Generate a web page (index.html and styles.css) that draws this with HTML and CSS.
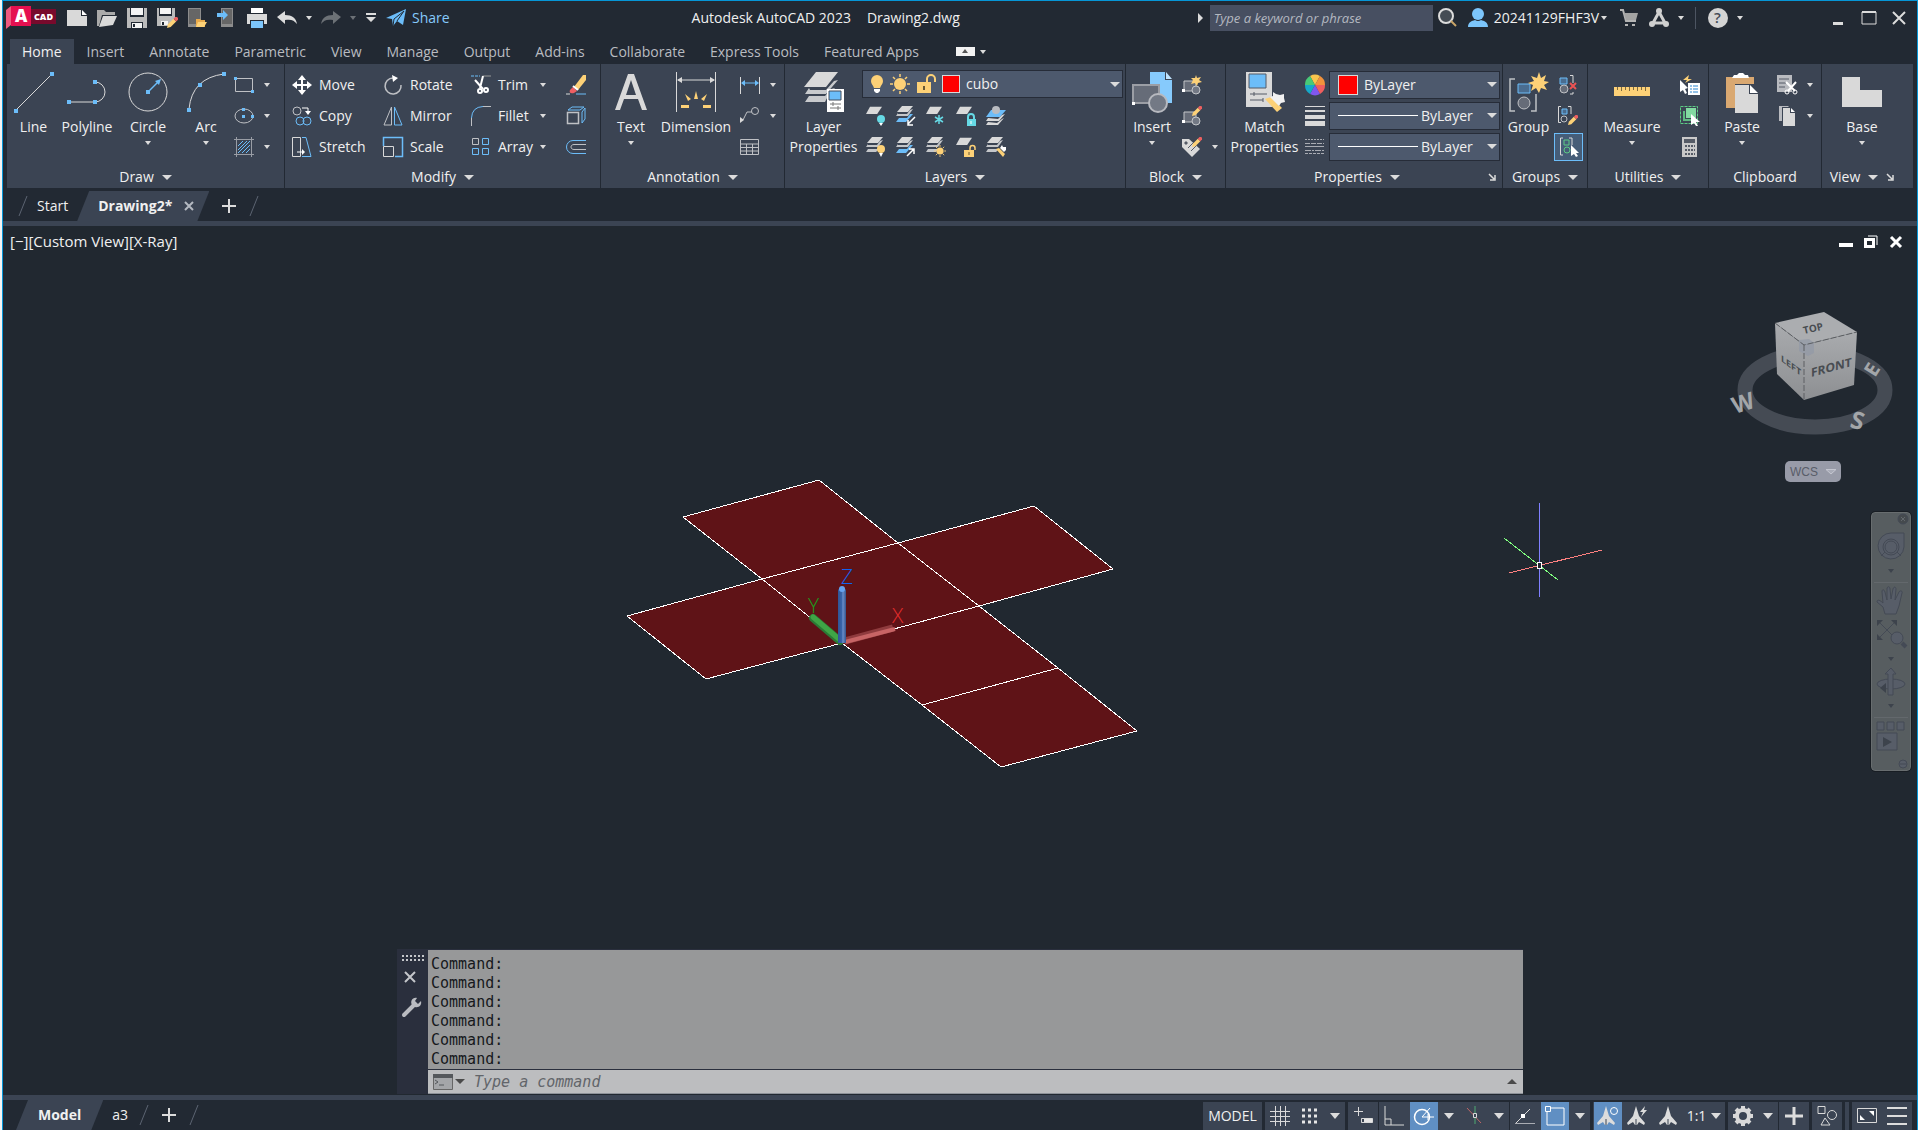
FILE: index.html
```html
<!DOCTYPE html>
<html lang="en">
<head>
    <meta charset="UTF-8">
    <meta name="viewport" content="width=device-width, initial-scale=1.0">
    <title>Autodesk AutoCAD 2023 - Drawing2.dwg</title>
    <link rel="stylesheet" href="styles.css">
</head>
<body>
    <!-- Shapes used more than once -->
    <svg class="defs" aria-hidden="true">
        <symbol id="caret" viewBox="0 0 6 4"><path d="M0 0h6L3 4z" fill="#dcdcdc"/></symbol>
        <symbol id="sheet" viewBox="0 0 20 20"><path d="M5 1h15l-6 9H0z" fill="#d9d9d9"/></symbol>
        <symbol id="stack" viewBox="0 0 20 20">
            <path d="M6 0h11l-5 6H1z" fill="#d9d9d9"/>
            <path d="M2 7L0 10h12l5-7-3 1-3 4H2zM2 12l-2 3h10l3-3z" fill="#c4c6c9"/>
        </symbol>
        <symbol id="stack-blue" viewBox="0 0 20 20">
            <path d="M6 0h11l-5 6H1z" fill="#d9d9d9"/>
            <path d="M2 7L0 10h12l5-7-3 1-3 4H2z" fill="#c4c6c9"/>
            <path d="M3 12l-3 4h10l7-8h-3l-3 4z" fill="#6cbdf9"/>
        </symbol>
        <symbol id="bulb" viewBox="0 0 14 20"><path d="M7 1a6 6 0 0 0-6 6c0 3 2 4 3 7h6c1-3 3-4 3-7a6 6 0 0 0-6-6z" fill="#fdd177"/><path d="M4 15h6v2l-2 2H6l-2-2z" fill="#fff"/></symbol>
        <symbol id="sun" viewBox="0 0 20 20"><circle cx="10" cy="10" r="6" fill="#fdd177"/><path d="M10 0v3M10 17v3M0 10h3M17 10h3M3 3l2 2M15 15l2 2M3 17l2-2M15 5l2-2" stroke="#fdd177" stroke-width="1.5"/></symbol>
        <symbol id="pencil" viewBox="0 0 12 12"><path d="M0 12l1-4 6-6 3 3-6 6z" fill="#fdd177"/><path d="M7 2l2-2h2l1 1v2l-2 2z" fill="#ec6060"/></symbol>
        <symbol id="block" viewBox="0 0 20 20"><path d="M2 6h12v10H2z" fill="#666c78" stroke="#c4c6c9"/><circle cx="14" cy="15" r="4" fill="#737985" stroke="#c4c6c9"/><path d="M0 14h3v3H0z" fill="#fff"/></symbol>
        <symbol id="launcher" viewBox="0 0 8 8"><path d="M1 1l5 5M7 2v5H2" fill="none" stroke="#dcdcdc" stroke-width="1.5"/></symbol>
        <symbol id="compass" viewBox="0 0 20 20"><path d="M10 0l3 10 6 7-1 2-5-3-2 3H9l-2-3-5 3-1-2 6-7z" fill="#dcdcdc"/><path d="M10 13v6" stroke="#3b4453"/></symbol>
    </svg>

    <div class="app">
        <header class="titlebar">
            <div class="quick-access">
                <button class="logo" aria-label="Application menu">
                    <svg width="50" height="24" viewBox="0 0 50 24">
                        <path d="M22 3h28v15H22z" fill="#780a2c"/>
                        <path d="M0 4l5-4v19l-5 4z" fill="#f0587e"/>
                        <path d="M5 0h20v20H5z" fill="#e51050"/>
                        <text x="9" y="16" font-size="17" font-weight="800" fill="#fff">A</text>
                        <text x="28" y="14" font-size="9" font-weight="800" fill="#fff">CAD</text>
                    </svg>
                </button>
                <button class="icon-button" aria-label="New">
                    <svg width="20" height="20"><path d="M0 2h14v6h6v10H0z" fill="#d9d9d9"/><path d="M15 2l5 5h-5z" fill="#fff"/></svg>
                </button>
                <button class="icon-button" aria-label="Open">
                    <svg width="20" height="20"><path d="M0 2h7l2 2h9v3H5L2 18H0z" fill="#aaa"/><path d="M6 8h14l-4 9-14 2z" fill="#d9d9d9"/></svg>
                </button>
                <button class="icon-button" aria-label="Save">
                    <svg width="20" height="20"><path d="M0 0h3v9h14V0h3v20h-4v-6H4v6H0z" fill="#bbb"/><path d="M4 0h12v7H4zM5 15h10v5H5z" fill="#f4f4f4"/><path d="M6 16h2v3H6z" fill="#222933"/></svg>
                </button>
                <button class="icon-button" aria-label="Save as">
                    <svg width="20" height="20"><path d="M0 0h2v8h13V0h3v10l-6 8H0z" fill="#bbb"/><path d="M3 0h11v6H3zM4 13h7v4H4z" fill="#f4f4f4"/><path d="M5 14h2v3H5z" fill="#222933"/><use href="#pencil" x="10" y="9" width="11" height="11"/></svg>
                </button>
                <button class="icon-button" aria-label="Open from web and mobile">
                    <svg width="20" height="20"><path d="M1 0h13v19H1z" fill="#8c8c8c"/><path d="M2 1h11v15H2z" fill="#666"/><path d="M9 11h4l1 1h4v7H9z" fill="#e9ab4c"/><path d="M11 14h9l-3 5H9z" fill="#fdd177"/></svg>
                </button>
                <button class="icon-button" aria-label="Save to web and mobile">
                    <svg width="20" height="20"><path d="M4 0h12v19H4z" fill="#8c8c8c"/><path d="M5 1h10v15H5z" fill="#666"/><path d="M0 5h6V2l5 5-5 5V9H0z" fill="#6cbdf9"/></svg>
                </button>
                <button class="icon-button" aria-label="Plot">
                    <svg width="20" height="20"><path d="M4 0h12v5H4z" fill="#fff"/><path d="M0 6h20v10h-3v-4H3v4H0z" fill="#d9d9d9"/><path d="M4 13h12v7H4z" fill="#7cc5fb"/></svg>
                </button>
                <button class="icon-button" aria-label="Undo">
                    <svg width="20" height="20"><path d="M0 9l8-6v4c7 0 11 3 12 9-3-4-6-5-12-4v4z" fill="#dcdcdc"/></svg>
                </button>
                <button class="caret-button" aria-label="Undo list"><svg width="6" height="4"><use href="#caret"/></svg></button>
                <button class="icon-button dim" aria-label="Redo">
                    <svg width="20" height="20"><path d="M20 9l-8-6v4C5 7 1 10 0 16c3-4 6-5 12-4v4z" fill="#dcdcdc"/></svg>
                </button>
                <button class="caret-button dim" aria-label="Redo list"><svg width="6" height="4"><use href="#caret"/></svg></button>
                <button class="caret-button customize" aria-label="Customize toolbar"><svg width="10" height="10"><path d="M0 0h10v2H0zM0 4h10L5 9z" fill="#dcdcdc"/></svg></button>
                <button class="share">
                    <svg width="20" height="18"><path d="M0 9L20 0l-3 16-6-4-4 5-1-7z" fill="#6cbdf9"/><path d="M7 17l1-7 10-8-7 10" fill="none" stroke="#222933"/></svg>
                    Share
                </button>
            </div>

            <div class="window-title">
                <span>Autodesk AutoCAD 2023</span>
                <span>Drawing2.dwg</span>
            </div>

            <div class="info-center">
                <svg width="5" height="10"><path d="M0 0l5 5-5 5z" fill="#dcdcdc"/></svg>
                <input class="search" type="search" placeholder="Type a keyword or phrase" aria-label="Search">
                <button class="icon-button" aria-label="Find">
                    <svg width="20" height="20"><circle cx="8" cy="8" r="7" fill="#454c54" stroke="#dcdcdc" stroke-width="2"/><path d="M13 13l5 5" stroke="#c9a468" stroke-width="2"/></svg>
                </button>
                <button class="account">
                    <svg width="20" height="20"><circle cx="10" cy="6" r="6" fill="#7cc5fb"/><path d="M0 19c0-5 4-6 7-7q3 2 6 0c3 1 7 2 7 7z" fill="#7cc5fb"/></svg>
                    <span>20241129FHF3V</span>
                    <svg width="6" height="4"><use href="#caret"/></svg>
                </button>
                <button class="icon-button" aria-label="App store">
                    <svg width="18" height="18"><path d="M0 1h3l3 11h10" fill="none" stroke="#b4b4b4" stroke-width="2"/><path d="M4 4h14l-2 7H6z" fill="#a3a3a3"/><path d="M5 15h3v2H5zM12 15h3v2h-3z" fill="#b4b4b4"/></svg>
                </button>
                <button class="icon-button" aria-label="Connected services">
                    <svg width="20" height="20"><path d="M10 4L4 15h12z" fill="none" stroke="#d0d0d0" stroke-width="3"/><circle cx="10" cy="3" r="3" fill="#d0d0d0"/><circle cx="3" cy="16" r="3" fill="#d0d0d0"/><circle cx="17" cy="16" r="3" fill="#d0d0d0"/></svg>
                </button>
                <button class="caret-button" aria-label="Services list"><svg width="6" height="4"><use href="#caret"/></svg></button>
                <span class="divider"></span>
                <button class="icon-button" aria-label="Help">
                    <svg width="20" height="20"><circle cx="10" cy="10" r="10" fill="#d4d4d4"/><text x="6" y="15" font-size="15" font-weight="600" fill="#444b57">?</text></svg>
                </button>
                <button class="caret-button" aria-label="Help list"><svg width="6" height="4"><use href="#caret"/></svg></button>
            </div>

            <div class="window-buttons">
                <button aria-label="Minimize"><svg width="16" height="16"><path d="M2 12h10v3H2z" fill="#dcdcdc"/></svg></button>
                <button aria-label="Maximize"><svg width="16" height="16"><path d="M1 2h14v12H1z" fill="none" stroke="#dcdcdc"/><path d="M1 1h14v2H1z" fill="#dcdcdc"/></svg></button>
                <button aria-label="Close"><svg width="16" height="16"><path d="M2 2l12 12M14 2L2 14" stroke="#dcdcdc" stroke-width="2"/></svg></button>
            </div>
        </header>

        <nav class="ribbon-tabs">
            <button class="active">Home</button>
            <button>Insert</button>
            <button>Annotate</button>
            <button>Parametric</button>
            <button>View</button>
            <button>Manage</button>
            <button>Output</button>
            <button>Add-ins</button>
            <button>Collaborate</button>
            <button>Express Tools</button>
            <button>Featured Apps</button>
            <button class="ribbon-toggle" aria-label="Minimize ribbon">
                <svg width="19" height="9"><path d="M0 0h19v9H0z" fill="#f2f2f2"/><path d="M6 6l3-4 3 4z" fill="#555"/></svg>
                <svg width="6" height="4"><use href="#caret"/></svg>
            </button>
        </nav>

        <main class="ribbon">
            <section class="panel draw">
                <div class="panel-body">
                    <button class="big"><svg width="40" height="40"><path d="M2 38L38 2" stroke="#d9d9d9"/><path d="M0 37h4v4H0zM36 0h4v4h-4z" fill="#6cbdf9"/></svg>Line</button>
                    <button class="big"><svg width="40" height="40"><path d="M2 30h26a10 10 0 0 0 0-20" fill="none" stroke="#d9d9d9"/><path d="M0 28h4v4H0zM26 28h4v4h-4zM26 8h4v4h-4z" fill="#6cbdf9"/></svg>Polyline</button>
                    <button class="big"><svg width="40" height="40"><circle cx="20" cy="20" r="19" fill="none" stroke="#d9d9d9"/><path d="M20 20l10-10" stroke="#6cbdf9" stroke-width="1.5"/><path d="M18 18h4v4h-4zM33 7l-2 6-4-4z" fill="#6cbdf9"/></svg>Circle<svg width="6" height="4"><use href="#caret"/></svg></button>
                    <button class="big"><svg width="40" height="40"><path d="M3 37Q6 6 38 2" fill="none" stroke="#d9d9d9"/><path d="M1 36h4v4H1zM36 0h4v4h-4zM12 11h4v4h-4z" fill="#6cbdf9"/></svg>Arc<svg width="6" height="4"><use href="#caret"/></svg></button>
                    <div class="stack">
                        <button class="tool" aria-label="Rectangle"><svg width="20" height="20"><path d="M1.5 3.5h17v13h-17z" fill="none" stroke="#bfc1c5"/><path d="M0 2h3v3H0zM17 15h3v3h-3z" fill="#6cbdf9"/></svg><svg class="more" width="6" height="4"><use href="#caret"/></svg></button>
                        <button class="tool" aria-label="Ellipse"><svg width="20" height="20"><ellipse cx="10" cy="10" rx="9" ry="7" fill="none" stroke="#bfc1c5"/><path d="M8 2h3v3H8zM8 9h3v3H8zM17 9h3v3h-3z" fill="#6cbdf9"/></svg><svg class="more" width="6" height="4"><use href="#caret"/></svg></button>
                        <button class="tool" aria-label="Hatch"><svg width="20" height="20"><path d="M2.5 0v20M17.5 0v20M0 2.5h20M0 17.5h20" stroke="#999da5"/><path d="M4 9l5-5M4 13l9-9M4 16L16 4M8 16l8-8M12 16l4-4" stroke="#6cbdf9"/></svg><svg class="more" width="6" height="4"><use href="#caret"/></svg></button>
                    </div>
                </div>
                <button class="panel-title"><span>Draw</span><svg width="10" height="5" viewBox="0 0 10 5"><path d="M0 0h10L5 5z" fill="#dcdcdc"/></svg></button>
            </section>

            <section class="panel modify">
                <div class="panel-body">
                    <div class="stack">
                        <button class="tool"><svg width="20" height="20"><path d="M10 2v16M2 10h16" stroke="#fff" stroke-width="2"/><path d="M10 0l4 5H6zM10 20l4-5H6zM0 10l5-4v8zM20 10l-5-4v8z" fill="#fff"/></svg>Move</button>
                        <button class="tool"><svg width="20" height="20"><circle cx="5" cy="5" r="4" fill="none" stroke="#bfc1c5"/><circle cx="8" cy="15" r="4" fill="none" stroke="#6cbdf9"/><circle cx="15" cy="15" r="4" fill="none" stroke="#6cbdf9"/><path d="M10 2h6v4" fill="none" stroke="#fff"/><path d="M13 5h6l-3 4z" fill="#fff"/></svg>Copy</button>
                        <button class="tool"><svg width="20" height="20"><path d="M.5.5h8v19h-8z" fill="none" stroke="#d9d9d9"/><path d="M10 .5h4l5 19h-9" fill="none" stroke="#6cbdf9"/><path d="M5 15h6" stroke="#fff"/><path d="M10 12l3 3-3 3z" fill="#fff"/></svg>Stretch</button>
                    </div>
                    <div class="stack">
                        <button class="tool"><svg width="20" height="20"><path d="M10 3a8 8 0 1 0 8 7" fill="none" stroke="#bfc1c5" stroke-width="1.5"/><path d="M9 0l6 3-5 4z" fill="#fff"/></svg>Rotate</button>
                        <button class="tool"><svg width="20" height="20"><path d="M8.5 1v18H1z" fill="none" stroke="#bfc1c5"/><path d="M11.5 1v18H19z" fill="none" stroke="#6cbdf9"/></svg>Mirror</button>
                        <button class="tool"><svg width="20" height="20"><path d="M.5 9V.5h19v19H12" fill="none" stroke="#6cbdf9" stroke-width="1.5"/><path d="M.5 9.5h10v10H.5z" fill="none" stroke="#d9d9d9"/></svg>Scale</button>
                    </div>
                    <div class="stack">
                        <button class="tool"><svg width="20" height="20"><path d="M0 1h9" stroke="#6cbdf9" stroke-dasharray="3 1"/><path d="M12 1h8" stroke="#999"/><path d="M4 5l8 9M12 1l-3 12" stroke="#fff" stroke-width="2"/><circle cx="9" cy="16" r="2" fill="none" stroke="#fff" stroke-width="2"/><circle cx="15" cy="15" r="2" fill="none" stroke="#fff" stroke-width="2"/></svg>Trim<svg class="more" width="6" height="4"><use href="#caret"/></svg></button>
                        <button class="tool"><svg width="20" height="20"><path d="M.5 12Q1 1 12 .5" fill="none" stroke="#6cbdf9"/><path d="M.5 12v8M12 .5h8" stroke="#bfc1c5"/></svg>Fillet<svg class="more" width="6" height="4"><use href="#caret"/></svg></button>
                        <button class="tool"><svg width="20" height="20" fill="none"><path d="M1.5 1.5h6v6h-6z" stroke="#bfc1c5"/><path d="M11.5 1.5h6v6h-6zM1.5 11.5h6v6h-6zM11.5 11.5h6v6h-6z" stroke="#6cbdf9"/></svg>Array<svg class="more" width="6" height="4"><use href="#caret"/></svg></button>
                    </div>
                    <div class="stack">
                        <button class="tool" aria-label="Erase"><svg width="20" height="20"><path d="M8 12L17 0h3v5l-8 10z" fill="#fdd177"/><path d="M7 12l4 4-3 2c-4 1-5-1-4-3z" fill="#ef5f63"/><path d="M7 11l5 4" stroke="#fff" stroke-width="2"/><path d="M0 19h4" stroke="#d9d9d9"/><path d="M10 19h10" stroke="#6cbdf9"/></svg></button>
                        <button class="tool" aria-label="Explode"><svg width="20" height="20" fill="none"><path d="M1.5 6.5h11v11h-11z" stroke="#bfc1c5" stroke-width="1.5"/><path d="M2 4l4-3h12l-4 3zM16 6l3-4v11l-3 4z" stroke="#6cbdf9"/></svg></button>
                        <button class="tool" aria-label="Offset"><svg width="20" height="20" fill="none"><path d="M20 3.5H7a6 6 0 0 0 0 13h13" stroke="#6cbdf9"/><path d="M20 7.5H8c-4 0-4 5 0 5h12" stroke="#bfc1c5"/></svg></button>
                    </div>
                </div>
                <button class="panel-title"><span>Modify</span><svg width="10" height="5" viewBox="0 0 10 5"><path d="M0 0h10L5 5z" fill="#dcdcdc"/></svg></button>
            </section>

            <section class="panel annotation">
                <div class="panel-body">
                    <button class="big"><svg width="40" height="40"><path d="M4 38L17 2h6l13 36h-5l-4-11H13L9 38zM15 23h10L20 8z" fill="#d9d9d9"/></svg>Text<svg width="6" height="4"><use href="#caret"/></svg></button>
                    <button class="big"><svg width="40" height="40"><path d="M.5 0v40M39.5 0v40M2 8h36" stroke="#d9d9d9"/><path d="M1 8l5-3v6zM39 8l-5-3v6z" fill="#d9d9d9"/><path d="M20 19l-2 8h4zM9 22l3 7 3-2zM31 22l-3 7-3-2zM5 33h8v3H5zM35 33h-8v3h8z" fill="#fdd177"/></svg>Dimension</button>
                    <div class="stack">
                        <button class="tool" aria-label="Linear dimension"><svg width="20" height="20"><path d="M.5 2v17M19.5 2v17" stroke="#d9d9d9"/><path d="M2 8h16" stroke="#6cbdf9"/><path d="M1 8l4-3v6zM19 8l-4-3v6z" fill="#6cbdf9"/></svg><svg class="more" width="6" height="4"><use href="#caret"/></svg></button>
                        <button class="tool" aria-label="Leader"><svg width="20" height="20"><path d="M3 14L7 6h5" fill="none" stroke="#bfc1c5"/><circle cx="15" cy="5" r="3.5" fill="none" stroke="#bfc1c5"/><path d="M0 17v-6l4 3z" fill="#d9d9d9"/></svg><svg class="more" width="6" height="4"><use href="#caret"/></svg></button>
                        <button class="tool" aria-label="Table"><svg width="20" height="20"><path d="M.5 2.5h18v15H.5zM0 7h19M0 10.5h19M0 14h19M6.5 7v10M12.5 7v10" fill="none" stroke="#bfc1c5"/></svg></button>
                    </div>
                </div>
                <button class="panel-title"><span>Annotation</span><svg width="10" height="5" viewBox="0 0 10 5"><path d="M0 0h10L5 5z" fill="#dcdcdc"/></svg></button>
            </section>

            <section class="panel layers">
                <div class="panel-body">
                    <button class="big"><svg width="40" height="40"><path d="M12 0h22L22 15H0z" fill="#d9d9d9"/><path d="M5 16L1 22h21L34 8l-4 1-8 9H6zM5 24l-4 6h20l3-6 7-8-4 1-6 7z" fill="#c8cacd"/><path d="M23 17h17v23H23z" fill="#fff"/><path d="M25 19h12v9H25z" fill="#6cbdf9" stroke="#454c5a"/><path d="M26 32h11M26 36h11M29 30v4M34 34v4" stroke="#777"/></svg>Layer<br>Properties</button>
                    <div class="layer-tools">
                        <label class="combo">
                            <svg width="14" height="20"><use href="#bulb"/></svg>
                            <svg width="20" height="20"><use href="#sun"/></svg>
                            <svg width="20" height="20"><path d="M1 8h14v11H1z" fill="#fdd177"/><path d="M11 8V5a4 4 0 0 1 8 0v3" fill="none" stroke="#fdd177" stroke-width="2"/><path d="M8 12v4" stroke="#6b5a35" stroke-width="2"/></svg>
                            <span class="swatch"></span>
                            <select aria-label="Layer"><option>cubo</option></select>
                            <svg width="10" height="5" viewBox="0 0 10 5"><path d="M0 0h10L5 5z" fill="#dcdcdc"/></svg>
                        </label>
                        <div class="tool-row">
                            <button aria-label="Layer off"><svg width="20" height="20"><use href="#sheet" width="16" height="16"/><circle cx="15" cy="13" r="4" fill="#66d9e5"/><path d="M13 17h4l-2 3z" fill="#fff"/></svg></button>
                            <button aria-label="Isolate layer"><svg width="20" height="20"><use href="#stack-blue"/><path d="M19 11l-7 7M12 14v5h5" fill="none" stroke="#fff" stroke-width="1.5"/></svg></button>
                            <button aria-label="Freeze layer"><svg width="20" height="20"><use href="#sheet" width="16" height="16"/><path d="M13 9v9M9 11l8 5M9 16l8-5" stroke="#66d9e5" stroke-width="1.5"/></svg></button>
                            <button aria-label="Lock layer"><svg width="20" height="20"><use href="#sheet" width="16" height="16"/><path d="M11 13h9v7h-9z" fill="#66d9e5"/><path d="M12 13v-2a3 3 0 0 1 6 0v2" fill="none" stroke="#66d9e5" stroke-width="2"/><path d="M15 15v3" stroke="#fff"/></svg></button>
                            <button aria-label="Make current"><svg width="20" height="20"><path d="M5 4h15l-6 7H0z" fill="#6cbdf9"/><path d="M2 12l-2 3h13l6-7-3 1-4 4zM2 16l-2 3h12l6-7-2 1-5 4z" fill="#d9d9d9"/><circle cx="10" cy="4" r="4" fill="#b9bbc0"/></svg></button>
                        </div>
                        <div class="tool-row">
                            <button aria-label="Turn all on"><svg width="20" height="20"><use href="#stack"/><circle cx="15" cy="12" r="4" fill="#fdd177"/><path d="M13 16h4l-2 4z" fill="#fff"/></svg></button>
                            <button aria-label="Unisolate"><svg width="20" height="20"><use href="#stack-blue"/><path d="M11 19l7-7M13 12h5v5" fill="none" stroke="#fff" stroke-width="1.5"/></svg></button>
                            <button aria-label="Thaw all"><svg width="20" height="20"><use href="#stack"/><use href="#sun" x="8" y="8" width="12" height="12"/></svg></button>
                            <button aria-label="Unlock layer"><svg width="20" height="20"><use href="#sheet" width="16" height="16"/><path d="M8 13h10v7H8z" fill="#fdd177"/><path d="M14 13v-2a2.5 2.5 0 0 1 5 0v2" fill="none" stroke="#fdd177" stroke-width="1.5"/><path d="M13 15v3" stroke="#6b5a35"/></svg></button>
                            <button aria-label="Match layer"><svg width="20" height="20"><use href="#stack"/><path d="M10 12l3-1 6 6-2 3z" fill="#fdd177"/><path d="M14 11l2-3 1 2h3v3l-2 2z" fill="#fff"/></svg></button>
                        </div>
                    </div>
                </div>
                <button class="panel-title"><span>Layers</span><svg width="10" height="5" viewBox="0 0 10 5"><path d="M0 0h10L5 5z" fill="#dcdcdc"/></svg></button>
            </section>

            <section class="panel block">
                <div class="panel-body">
                    <button class="big"><svg width="40" height="40"><path d="M18 0h15v8h7v23H18z" fill="#86cafc"/><path d="M34 0l6 7h-6z" fill="#bfe3fe"/><path d="M1 13h26v18H1z" fill="#666c78" stroke="#9b9ea5" stroke-width="2"/><circle cx="26" cy="31" r="9" fill="#737985" stroke="#b7b9bf" stroke-width="2"/><path d="M0 30h3v3H0z" fill="#fff"/></svg>Insert<svg width="6" height="4"><use href="#caret"/></svg></button>
                    <div class="stack">
                        <button class="tool" aria-label="Create block"><svg width="20" height="20"><use href="#block"/><path d="M14 0l1 3 4-1-2 3 3 2-4 1-1 3-2-3-4 1 2-4-2-2 4 0z" fill="#fdd177"/></svg></button>
                        <button class="tool" aria-label="Edit block"><svg width="20" height="20"><use href="#block"/><use href="#pencil" x="10" y="0" width="10" height="10"/></svg></button>
                        <button class="tool" aria-label="Edit attributes"><svg width="20" height="20"><path d="M0 2h7l11 10-8 8L0 10z" fill="#d9d9d9"/><path d="M3 5h2v2H3zM6 11l5-5M9 14l5-5" stroke="#555b66" fill="#555b66"/><use href="#pencil" x="10" y="0" width="10" height="10"/></svg><svg class="more" width="6" height="4"><use href="#caret"/></svg></button>
                    </div>
                </div>
                <button class="panel-title"><span>Block</span><svg width="10" height="5" viewBox="0 0 10 5"><path d="M0 0h10L5 5z" fill="#dcdcdc"/></svg></button>
            </section>

            <section class="panel properties">
                <div class="panel-body">
                    <button class="big"><svg width="40" height="40"><path d="M1 0h26v35H1z" fill="#d9d9d9"/><path d="M4 2h17v14H4z" fill="#6cbdf9" stroke="#555b66"/><path d="M5 22h17M5 28h13M9 20v4M18 26v4" stroke="#555b66"/><path d="M20 27l6-2 11 11-5 4z" fill="#fdd177"/><path d="M25 25l3-1v-4l3 2 4 1 4-1v4l1 4-4 1-2 3z" fill="#f1f1f1"/></svg>Match<br>Properties</button>
                    <div class="stack">
                        <button class="tool" aria-label="Object color"><svg width="20" height="20"><path d="M10 10L5 1a10 10 0 0 1 10 0z" fill="#f9c44d"/><path d="M10 10l5-9a10 10 0 0 1 5 9z" fill="#f2923c"/><path d="M10 10h10a10 10 0 0 1-5 9z" fill="#ef5e5e"/><path d="M10 10l5 9a10 10 0 0 1-10 0z" fill="#8057ee"/><path d="M10 10l-5 9a10 10 0 0 1-5-9z" fill="#15a9c9"/><path d="M10 10H0a10 10 0 0 1 5-9z" fill="#48c977"/></svg></button>
                        <button class="tool" aria-label="Lineweight"><svg width="20" height="20"><path d="M0 0h20v1H0zM0 4h20v2H0zM0 9h20v4H0zM0 15h20v5H0z" fill="#d9d9d9"/></svg></button>
                        <button class="tool" aria-label="Linetype"><svg width="20" height="20" stroke="#a9acb3"><path d="M0 2.5h19" stroke-dasharray="2 1"/><path d="M0 6.5h19" stroke-dasharray="5 1"/><path d="M0 9.5h19"/><path d="M0 13.5h19" stroke-dasharray="6 1 2 1"/><path d="M0 16.5h19" stroke-dasharray="3 1"/></svg></button>
                    </div>
                    <div class="stack">
                        <label class="combo"><span class="swatch large"></span><select aria-label="Color"><option>ByLayer</option></select><svg width="10" height="5" viewBox="0 0 10 5"><path d="M0 0h10L5 5z" fill="#dcdcdc"/></svg></label>
                        <label class="combo"><span class="sample"></span><select aria-label="Lineweight"><option>ByLayer</option></select><svg width="10" height="5" viewBox="0 0 10 5"><path d="M0 0h10L5 5z" fill="#dcdcdc"/></svg></label>
                        <label class="combo"><span class="sample"></span><select aria-label="Linetype"><option>ByLayer</option></select><svg width="10" height="5" viewBox="0 0 10 5"><path d="M0 0h10L5 5z" fill="#dcdcdc"/></svg></label>
                    </div>
                </div>
                <div class="panel-foot">
                    <button class="panel-title"><span>Properties</span><svg width="10" height="5" viewBox="0 0 10 5"><path d="M0 0h10L5 5z" fill="#dcdcdc"/></svg></button>
                    <button aria-label="Properties palette"><svg width="8" height="8"><use href="#launcher"/></svg></button>
                </div>
            </section>

            <section class="panel groups">
                <div class="panel-body">
                    <button class="big"><svg width="40" height="40"><path d="M6 7H1v32h5M22 39h5V22" fill="none" stroke="#bfc1c5" stroke-width="1.5"/><path d="M9 12h12v9H9z" fill="#4a6d90" stroke="#6cbdf9"/><circle cx="15" cy="31" r="6" fill="#666c78" stroke="#bfc1c5"/><path d="M30 0l2 6 5-3-2 6 5 1-5 3 3 5-6-2-2 5-3-5-5 3 2-6-5-2 6-2-3-5 6 2z" fill="#fdd177"/></svg>Group</button>
                    <div class="stack">
                        <button class="tool" aria-label="Ungroup"><svg width="20" height="20" fill="none"><path d="M2 3h7v6H2z" fill="#4a6d90" stroke="#6cbdf9"/><circle cx="6" cy="14" r="4" fill="#666c78" stroke="#bfc1c5"/><path d="M12 .5h3V8M15 17v2h-3" stroke="#d9d9d9"/><path d="M12 8l6 6M18 8l-6 6" stroke="#ec5353" stroke-width="2"/></svg></button>
                        <button class="tool" aria-label="Group edit"><svg width="20" height="20" fill="none"><path d="M3 .5H.5v16H3M10 .5h3V8" stroke="#d9d9d9"/><path d="M4 3h5v5H4z" fill="#4a6d90" stroke="#6cbdf9"/><circle cx="6" cy="13" r="3" stroke="#bfc1c5"/><use href="#pencil" x="10" y="9" width="10" height="10"/></svg></button>
                        <button class="tool selected" aria-label="Group selection"><svg width="20" height="20" fill="none"><path d="M4 1H1.5v17H4M10 1h3v7" stroke="#d9d9d9"/><path d="M5 3h5v5H5z" stroke="#5dcc85"/><circle cx="8" cy="13" r="3" stroke="#5dcc85"/><path d="M12 8l8 8h-3l2 3-2 1-2-3-3 2z" fill="#fff"/></svg></button>
                    </div>
                </div>
                <button class="panel-title"><span>Groups</span><svg width="10" height="5" viewBox="0 0 10 5"><path d="M0 0h10L5 5z" fill="#dcdcdc"/></svg></button>
            </section>

            <section class="panel utilities">
                <div class="panel-body">
                    <button class="big"><svg width="40" height="40"><path d="M2 15h36v9H2z" fill="#fdd177"/><path d="M5.5 15v3M9.5 15v4M13.5 15v3M17.5 15v4M21.5 15v3M25.5 15v4M29.5 15v3M33.5 15v4" stroke="#7d6a3f"/></svg>Measure<svg width="6" height="4"><use href="#caret"/></svg></button>
                    <div class="stack">
                        <button class="tool" aria-label="Quick select"><svg width="20" height="20"><path d="M0 5l8 8-3 1 2 4-2 1-2-4-3 2z" fill="#fff"/><path d="M9 0L3 5h4L5 8l7-4H8z" fill="#fdd177"/><path d="M8 8h12v12H8z" fill="#fff"/><path d="M10 11h2M10 14h2M10 17h2M13 11h5M13 14h5M13 17h5" stroke="#2a86d1"/></svg></button>
                        <button class="tool" aria-label="Select all"><svg width="20" height="20"><path d="M.5.5h17v17H.5z" fill="none" stroke="#5dcc85" stroke-dasharray="3 1"/><path d="M6 2h10v10H6z" fill="#82d9a1"/><path d="M5 5H3v10h10v-2H5z" fill="#5fb981"/><path d="M11 8l9 8h-4l2 4h-2l-2-3-3 2z" fill="#fff"/></svg></button>
                        <button class="tool" aria-label="Calculator"><svg width="20" height="20"><path d="M2 0h15v20H2z" fill="#c9c9c9"/><path d="M4 2h11v4H4z" fill="#555b66"/><path d="M5 9h10M5 13h10M5 17h10" stroke="#555b66" stroke-width="2" stroke-dasharray="2 1"/></svg></button>
                    </div>
                </div>
                <button class="panel-title"><span>Utilities</span><svg width="10" height="5" viewBox="0 0 10 5"><path d="M0 0h10L5 5z" fill="#dcdcdc"/></svg></button>
            </section>

            <section class="panel clipboard">
                <div class="panel-body">
                    <button class="big"><svg width="40" height="40"><path d="M4 5h28v7H13v24H4z" fill="#d9a871"/><path d="M10 6l2-3h3l2-2h4l2 2h3l1 3z" fill="#fff"/><path d="M13 13h14v9h9v19H13z" fill="#d9d9d9"/><path d="M28 13l8 8h-8z" fill="#fff"/></svg>Paste<svg width="6" height="4"><use href="#caret"/></svg></button>
                    <div class="stack">
                        <button class="tool" aria-label="Cut"><svg width="20" height="20"><path d="M0 0h15v17H0z" fill="#b9bbc0"/><path d="M2 4h10M2 8h7M2 12h6" stroke="#555b66"/><path d="M9 7l9 9M19 7l-8 9" stroke="#fff" stroke-width="2"/><circle cx="10" cy="17" r="2" fill="none" stroke="#fff"/><circle cx="18" cy="17" r="2" fill="none" stroke="#fff"/></svg><svg class="more" width="6" height="4"><use href="#caret"/></svg></button>
                        <button class="tool" aria-label="Copy clip"><svg width="20" height="20"><path d="M2 0h9l1 1H5v14H2z" fill="#b9bbc0"/><path d="M6 2h7v5h5v13H6z" fill="#d9d9d9"/><path d="M14 2l4 4h-4z" fill="#fff"/></svg><svg class="more" width="6" height="4"><use href="#caret"/></svg></button>
                    </div>
                </div>
                <div class="panel-title"><span>Clipboard</span></div>
            </section>

            <section class="panel view">
                <div class="panel-body">
                    <button class="big"><svg width="40" height="40"><path d="M0 5h18v13h22v17H0z" fill="#d9d9d9"/></svg>Base<svg width="6" height="4"><use href="#caret"/></svg></button>
                </div>
                <div class="panel-foot">
                    <button class="panel-title"><span>View</span><svg width="10" height="5" viewBox="0 0 10 5"><path d="M0 0h10L5 5z" fill="#dcdcdc"/></svg></button>
                    <button aria-label="View settings"><svg width="8" height="8"><use href="#launcher"/></svg></button>
                </div>
            </section>
        </main>

        <nav class="file-tabs">
            <svg width="10" height="20"><path d="M1 20L9 0" stroke="#5c6472"/></svg>
            <button class="file-tab">Start</button>
            <div class="file-tab active">
                <button>Drawing2*</button>
                <button aria-label="Close drawing"><svg width="10" height="10"><path d="M1 1l8 8M9 1L1 9" stroke="#b4b9c1" stroke-width="2"/></svg></button>
            </div>
            <button class="add" aria-label="New drawing"><svg width="16" height="16"><path d="M8 1v14M1 8h14" stroke="#dcdcdc" stroke-width="2"/></svg></button>
            <svg width="10" height="20"><path d="M1 20L9 0" stroke="#5c6472"/></svg>
        </nav>

        <section class="canvas">
            <svg class="model" role="img" aria-label="Unfolded cube">
                <defs>
                    <linearGradient id="zbar"><stop offset="0" stop-color="#2f5596"/><stop offset=".5" stop-color="#3a66ab"/><stop offset=".6" stop-color="#6c8fca"/><stop offset="1" stop-color="#34558e"/></linearGradient>
                    <linearGradient id="side" x2="0" y2="1"><stop offset="0" stop-color="#a9abae"/><stop offset="1" stop-color="#8d8f92"/></linearGradient>
                </defs>
                <g transform="translate(-3 -226)">
                    <path class="face" d="M819 480L898 543 1034 506 1113 569 979 606 1058 668 1137 731 1001 767 922 705 842 643 706 679 627 616 762 579 683 517z"/>
                    <path class="edge" d="M762 579L898 543 979 606 842 643zM1058 668L922 705"/>
                    <path d="M813 618l27 23" stroke="#2b7a35" stroke-width="8" stroke-linecap="round"/>
                    <path d="M813 617l27 23" stroke="#3fa546" stroke-width="5" stroke-linecap="round"/>
                    <path d="M845 641l48-13" stroke="#8f3b3e" stroke-width="7"/>
                    <path d="M845 642l50-13" stroke="#c76465" stroke-width="4"/>
                    <path d="M838 590q4-6 8 0v53h-8z" fill="url(#zbar)"/>
                    <circle cx="842" cy="589" r="3" fill="#65a2ef"/>
                    <g class="axis">
                        <text x="841" y="584" fill="#1263f1">Z</text>
                        <text x="808" y="613" fill="#1d981d">Y</text>
                        <text x="892" y="623" fill="#e32c2c">X</text>
                    </g>
                    <g shape-rendering="crispEdges">
                        <path d="M1504 538l54 42" stroke="#80ff80"/>
                        <path d="M1509 573l93-23" stroke="#ff8080"/>
                        <path d="M1539.5 503v94" stroke="#8080ff"/>
                        <path d="M1537.5 562.5h4v6h-4z" fill="#212830" stroke="#fff"/>
                    </g>
                </g>
            </svg>

            <div class="view-controls">
                <button>[−]</button><button>[Custom View]</button><button>[X-Ray]</button>
            </div>
            <div class="view-buttons">
                <button aria-label="Minimize view"><svg width="14" height="14"><path d="M0 8h14v4H0z" fill="#fff"/></svg></button>
                <button aria-label="Restore view"><svg width="14" height="14" fill="none"><path d="M4 1h9v9" stroke="#fff"/><path d="M1.5 4.5h8v7h-8z" stroke="#fff" stroke-width="3"/></svg></button>
                <button aria-label="Close view"><svg width="14" height="14"><path d="M2 2l10 10M12 2L2 12" stroke="#fff" stroke-width="3"/></svg></button>
            </div>

            <div class="view-cube">
                <svg width="166" height="132" viewBox="1729 306 166 132">
                    <ellipse cx="1814" cy="390" rx="70" ry="37" fill="none" stroke="#454b54" stroke-width="15"/>
                    <path d="M1774 323l49-11 33 20-53 13z" fill="#abadb0"/>
                    <path d="M1774 323l29 22v55l-27-26z" fill="url(#side)"/>
                    <path d="M1803 345l53-13-3 53-50 15z" fill="url(#side)"/>
                    <path d="M1798 340l10-1 5 4v10l-6 3-9-5z" fill="#9199a7" opacity=".7"/>
                    <path d="M1774 323l29 22 53-13M1803 345v55" fill="none" stroke="#5c5f63" stroke-dasharray="6 2"/>
                    <g font-weight="700" fill="#484c51">
                        <text transform="translate(1810 377) skewY(-15)" font-size="12">FRONT</text>
                        <text transform="translate(1780 361) skewY(37)" font-size="9">LEFT</text>
                        <text transform="translate(1803 334) rotate(-13)" font-size="10">TOP</text>
                    </g>
                    <g font-weight="700" fill="#a3a6a9">
                        <text transform="translate(1734 414) rotate(-18)" font-size="23">W</text>
                        <text transform="translate(1848 427) rotate(15)" font-size="24">S</text>
                        <text transform="translate(1874 378) rotate(-58)" font-size="20">E</text>
                    </g>
                </svg>
                <button class="wcs">WCS <svg width="10" height="6"><path d="M0 .5h10L5 5z" fill="#a9acb8" stroke="#c4c6d0"/></svg></button>
            </div>

            <div class="nav-bar">
                <button class="end" aria-label="Close navigation bar"><svg width="10" height="10"><circle cx="5" cy="5" r="5" fill="#454a4e"/><path d="M3 3l4 4M7 3L3 7" stroke="#63686c"/></svg></button>
                <button aria-label="Steering wheel"><svg width="30" height="30"><path d="M15 1h13v14A13 13 0 1 1 15 1z"/><circle cx="15" cy="15" r="8"/><circle cx="15" cy="15" r="6"/><path d="M9 20l-4 4M21 20l4 4"/></svg></button>
                <button class="drop" aria-label="Wheel list"><svg width="6" height="4"><path d="M0 0h6L3 4z"/></svg></button>
                <hr>
                <button aria-label="Pan"><svg width="30" height="30"><path d="M9 28L7 21 1 16c0-3 3-2 6 1L6 6c0-3 2-3 3 0l2 8V3c0-3 3-3 3 0l1 10 2-10c1-3 3-2 3 0l-1 11 4-8c1-2 4-1 3 1l-3 13-3 8z"/></svg></button>
                <button aria-label="Zoom extents"><svg width="30" height="34"><path d="M3 6l16 16M19 6L3 22"/><path class="solid" d="M1 4h6L1 10zM21 4h-6l6 6zM1 24h6l-6-6z"/><circle cx="21" cy="22" r="6"/><path d="M26 27l4 4" stroke-width="4"/></svg></button>
                <button class="drop" aria-label="Zoom list"><svg width="6" height="4"><path d="M0 0h6L3 4z"/></svg></button>
                <button aria-label="Orbit"><svg width="30" height="30"><ellipse cx="15" cy="17" rx="14" ry="5"/><path d="M12 28V7H9l6-6 5 6h-3v21z"/><path class="solid" d="M4 21l6-5v10z"/></svg></button>
                <button class="drop" aria-label="Orbit list"><svg width="6" height="4"><path d="M0 0h6L3 4z"/></svg></button>
                <hr>
                <button aria-label="Show motion"><svg width="30" height="30"><path d="M1 1h7v8H1zM11 1h7v8h-7zM21 1h7v8h-7zM1 12h20v17H1z"/><path class="solid" d="M7 16l9 5-9 5z"/></svg></button>
                <button class="end last" aria-label="Customize navigation bar"><svg width="10" height="10"><circle cx="5" cy="5" r="4"/><path d="M2 5h6"/></svg></button>
            </div>

            <div class="command-window">
                <div class="command-grip">
                    <svg width="22" height="7"><path d="M0 1h22M0 5h22" stroke="#c4c6ca" stroke-width="2" stroke-dasharray="2 2"/></svg>
                    <button aria-label="Close command line"><svg width="16" height="12"><path d="M3 1l10 10M13 1L3 11" stroke="#c4c6ca" stroke-width="2"/></svg></button>
                    <button aria-label="Customize"><svg width="20" height="20"><path d="M2 18l10-10" stroke="#b9bbc0" stroke-width="4" stroke-linecap="round"/><path d="M15 1c-5-1-7 4-5 7l3 2c4 1 7-2 6-6l-3 3-3-3z" fill="#b9bbc0"/></svg></button>
                </div>
                <div class="command-main">
                    <ol class="history">
                        <li>Command:</li>
                        <li>Command:</li>
                        <li>Command:</li>
                        <li>Command:</li>
                        <li>Command:</li>
                        <li>Command:</li>
                    </ol>
                    <div class="prompt">
                        <button aria-label="Recent commands">
                            <svg width="20" height="16"><path d="M.5.5h19v15H.5z" fill="#a4a6a9" stroke="#666"/><path d="M0 0h20v4H0z" fill="#55585c"/><path d="M2 6l3 2-3 2M6 11h5" fill="none" stroke="#55585c"/></svg>
                            <svg width="10" height="5"><path d="M0 0h10L5 5z" fill="#4a4a4a"/></svg>
                        </button>
                        <input type="text" placeholder="Type a command" aria-label="Command line">
                        <button aria-label="Show history"><svg width="10" height="5"><path d="M0 5h10L5 0z" fill="#4a4a4a"/></svg></button>
                    </div>
                </div>
            </div>
        </section>

        <footer class="statusbar">
            <nav class="layout-tabs">
                <button class="layout-tab active">Model</button>
                <button class="layout-tab">a3</button>
                <svg width="10" height="20"><path d="M1 20L9 0" stroke="#5c6472"/></svg>
                <button class="add" aria-label="New layout"><svg width="16" height="16"><path d="M8 1v14M1 8h14" stroke="#dcdcdc" stroke-width="2"/></svg></button>
                <svg width="10" height="20"><path d="M1 20L9 0" stroke="#5c6472"/></svg>
            </nav>
            <div class="status-tools">
                <div class="group"><button class="space">MODEL</button></div>
                <div class="group">
                    <button aria-label="Grid"><svg width="20" height="20"><path d="M5.5 0v20M10.5 0v20M15.5 0v20M0 5.5h20M0 10.5h20M0 15.5h20" stroke="#d9d9d9"/></svg></button>
                    <button aria-label="Snap"><svg width="20" height="20"><path d="M2 4h16M2 10h16M2 16h16" stroke="#e6e6e6" stroke-width="3" stroke-dasharray="3 3"/></svg></button>
                    <button class="list" aria-label="Snap list"><svg width="10" height="6"><path d="M0 0h10L5 6z" fill="#dcdcdc"/></svg></button>
                </div>
                <div class="group">
                    <button aria-label="Dynamic input"><svg width="20" height="20"><path d="M5.5 1v9M1 5.5h9" stroke="#d9d9d9"/><path d="M8.5 12.5h11v4h-11z" fill="#e6e6e6" stroke="#d9d9d9"/><path d="M9 13h2v3H9z" fill="#3b4453"/></svg></button>
                </div>
                <div class="group joined">
                    <button aria-label="Ortho"><svg width="20" height="20"><path d="M1 0v19h19" fill="none" stroke="#d9d9d9"/><path d="M1 13h6v6" fill="none" stroke="#d9d9d9"/></svg></button>
                    <button class="on" aria-label="Polar tracking"><svg width="20" height="20"><circle cx="8" cy="11" r="7.5" fill="none" stroke="#fff" stroke-width="1.5"/><path d="M8 11h12M8 11l8-9M14 8v6" fill="none" stroke="#fff"/></svg></button>
                    <button class="list" aria-label="Polar list"><svg width="10" height="6"><path d="M0 0h10L5 6z" fill="#dcdcdc"/></svg></button>
                    <button aria-label="Isometric drafting"><svg width="20" height="20"><path d="M3 2l14 15" stroke="#b66"/><path d="M11 0v18" stroke="#4fa973"/><path d="M9.5 7.5h3v4h-3z" fill="#3b4453" stroke="#d9d9d9"/></svg></button>
                    <button class="list" aria-label="Isometric list"><svg width="10" height="6"><path d="M0 0h10L5 6z" fill="#dcdcdc"/></svg></button>
                </div>
                <div class="group joined">
                    <button aria-label="Object snap tracking"><svg width="20" height="20"><path d="M15 3L1 17" stroke="#d9d9d9"/><path d="M0 17.5h20" stroke="#a9acb3"/><path d="M6 8h4v4H6z" fill="#fff"/></svg></button>
                    <button class="on" aria-label="Object snap"><svg width="20" height="20" fill="none"><path d="M6 2h13v17H2V6" stroke="#fff"/><path d="M.5.5h5v5h-5z" stroke="#fff"/></svg></button>
                    <button class="list" aria-label="Object snap list"><svg width="10" height="6"><path d="M0 0h10L5 6z" fill="#dcdcdc"/></svg></button>
                </div>
                <div class="group">
                    <button class="on" aria-label="Annotation visibility"><svg width="20" height="20"><use href="#compass" x="-2" y="0" width="20" height="20"/><circle cx="16" cy="5" r="3.5" fill="none" stroke="#fff"/></svg></button>
                    <button aria-label="Auto scale"><svg width="20" height="20"><use href="#compass" x="-2" y="0" width="20" height="20"/><path d="M17 0l-5 6h3l-2 5 6-7h-3z" fill="#dcdcdc"/></svg></button>
                    <button aria-label="Annotation scale"><svg width="20" height="20"><use href="#compass" x="0" y="0" width="20" height="20"/></svg></button>
                    <button class="scale">1:1 <svg width="10" height="6"><path d="M0 0h10L5 6z" fill="#dcdcdc"/></svg></button>
                </div>
                <div class="group">
                    <button aria-label="Workspace"><svg width="20" height="20"><circle cx="10" cy="10" r="6" fill="none" stroke="#d9d9d9" stroke-width="4"/><path d="M10 0v4M10 16v4M0 10h4M16 10h4M3 3l3 3M14 14l3 3M3 17l3-3M14 6l3-3" stroke="#d9d9d9" stroke-width="4"/></svg></button>
                    <button class="list" aria-label="Workspace list"><svg width="10" height="6"><path d="M0 0h10L5 6z" fill="#dcdcdc"/></svg></button>
                </div>
                <div class="group joined"><button aria-label="Annotation monitor"><svg width="20" height="20"><path d="M10 1v18M1 10h18" stroke="#dcdcdc" stroke-width="3"/></svg></button></div>
                <div class="group"><button aria-label="Isolate objects"><svg width="20" height="20" fill="none" stroke="#d9d9d9"><path d="M1 .5h7v7H1zM8 12l-4 7h9z"/><circle cx="15" cy="9" r="4.5"/></svg></button></div>
                <div class="group sliver"></div>
                <div class="group">
                    <button aria-label="Clean screen"><svg width="20" height="16"><path d="M.5.5h19v14H.5z" fill="none" stroke="#d9d9d9"/><path d="M17 3v5l-5-5zM3 12V7l5 5z" fill="#fff"/></svg></button>
                    <button aria-label="Customization"><svg width="20" height="20"><path d="M0 2h20M0 10h20M0 18h20" stroke="#dcdcdc" stroke-width="2"/></svg></button>
                </div>
            </div>
        </footer>
    </div>
</body>
</html>
```
FILE: styles.css
```css
* {
    box-sizing: border-box;
}

body {
    margin: 0;
    padding-left: 2px;
    background-color: #f4f4f4;
    color: #f0f0f0;
    font-family: "Open Sans", "Noto Sans", sans-serif;
    font-size: 14px;
    line-height: 20px;
}

button {
    display: flex;
    align-items: center;
    justify-content: center;
    padding: 0;
    border: none;
    background: none;
    color: inherit;
    font: inherit;
    white-space: nowrap;
}

svg {
    display: block;
    flex: none;
    overflow: visible;
}

.defs {
    position: absolute;
    width: 0;
    height: 0;
}

.dim {
    opacity: 0.4;
}

.app {
    display: flex;
    flex-direction: column;
    height: 100vh;
    border: 1px solid #0696d7;
    border-bottom: none;
    background-color: #222933;
    overflow: hidden;
}

/* Title bar */
.titlebar {
    display: flex;
    align-items: center;
    height: 38px;
    padding: 0 10px 4px 3px;
}

.quick-access,
.info-center,
.window-buttons {
    display: flex;
    align-items: center;
}

.logo {
    width: 56px;
    padding-right: 6px;
}

.icon-button {
    width: 30px;
    height: 30px;
}

.caret-button {
    width: 14px;
    height: 30px;
}

.customize {
    width: 22px;
}

.share {
    gap: 6px;
    margin-left: 4px;
    color: #86cafc;
}

.window-title {
    display: flex;
    flex: 1;
    justify-content: center;
    gap: 16px;
    padding-left: 4px;
}

.search {
    width: 223px;
    height: 26px;
    margin-left: 7px;
    padding: 0 4px;
    border: none;
    background-color: #474f61;
    color: #f0f0f0;
    font: italic 13px "Open Sans", sans-serif;
}

.search::placeholder {
    color: #b4b8c0;
    opacity: 1;
}

.account {
    gap: 6px;
    margin: 0 7px 0 5px;
}

.account svg:last-child {
    margin-left: -4px;
}

.divider {
    width: 1px;
    height: 22px;
    margin: 0 7px;
    background-color: #4d5562;
}

.window-buttons {
    gap: 14px;
    margin-left: 84px;
}

/* Ribbon tabs */
.ribbon-tabs {
    display: flex;
    gap: 1px;
    height: 25px;
    padding-left: 7px;
}

.ribbon-tabs button {
    padding: 0 12px;
    color: #b9bcc1;
}

.ribbon-tabs .active {
    background-color: #3b4453;
    color: #f0f0f0;
}

.ribbon-tabs .ribbon-toggle {
    gap: 5px;
    padding: 0 24px;
}

/* Ribbon */
.ribbon {
    display: flex;
    height: 124px;
    margin: 0 4px;
    background-color: #3b4453;
}

.panel {
    display: flex;
    flex: none;
    flex-direction: column;
    border-right: 1px solid #222933;
}

.panel:last-child {
    flex: 1;
    border-right: none;
}

.panel-body {
    display: grid;
    flex: 1;
    padding-top: 5px;
}

.draw { width: 278px; }
.draw .panel-body { grid-template-columns: 53px 54px 68px 48px 1fr; }

.modify { width: 316px; }
.modify .panel-body { grid-template-columns: 91px 88px 95px 1fr; padding-left: 3px; }

.annotation { width: 184px; }
.annotation .panel-body { grid-template-columns: 60px 70px 1fr; }
.annotation .stack { padding-left: 5px; }

.layers { width: 341px; }
.layers .panel-body { grid-template-columns: 77px 1fr; }

.block { width: 100px; }
.block .panel-body { grid-template-columns: 52px 1fr; }

.properties { width: 277px; }
.properties .panel-body { grid-template-columns: 77px 26px 1fr; padding-right: 2px; }
.properties .tool { padding-left: 2px; }

.groups { width: 85px; }
.groups .panel-body { grid-template-columns: 51px 1fr; }

.utilities { width: 121px; }
.utilities .panel-body { grid-template-columns: 88px 1fr; }

.clipboard { width: 113px; }
.clipboard .panel-body { grid-template-columns: 66px 1fr; }
.clipboard .tool { padding-left: 2px; }

.view .panel-body { grid-template-columns: 80px; }

.big {
    flex-direction: column;
    justify-content: flex-start;
    padding-top: 3px;
    text-align: center;
    line-height: 20px;
}

.big svg:first-child {
    margin-bottom: 5px;
}

.big svg:last-child:not(:first-child) {
    margin-top: 4px;
}

.stack {
    display: grid;
    grid-template-rows: repeat(3, 31px);
    align-items: center;
}

.tool {
    justify-content: flex-start;
    gap: 7px;
    height: 28px;
    padding-left: 4px;
}

.tool .more {
    margin-left: 3px;
}

.modify .tool .more {
    margin: 0 18px 0 auto;
}

.groups .tool {
    width: 29px;
}

.tool.selected {
    border: 1px solid #6cbdf9;
    background-color: #465d78;
}

.tool-row {
    display: flex;
    align-items: center;
    gap: 10px;
    height: 31px;
    padding-left: 4px;
}

.layer-tools {
    padding: 1px 2px 0 0;
}

.layer-tools .combo {
    margin-bottom: 2px;
    padding-left: 7px;
}

.combo {
    display: flex;
    align-items: center;
    gap: 6px;
    height: 28px;
    padding: 0 2px 0 8px;
    border: 1px solid #262c38;
    background-color: #4d596d;
}

.combo select {
    flex: 1;
    min-width: 0;
    padding: 0;
    border: none;
    background: none;
    color: inherit;
    font: inherit;
    appearance: none;
}

.swatch {
    width: 18px;
    height: 18px;
    border: 1px solid #d9d9d9;
    background-color: #ff0000;
}

.swatch.large {
    width: 20px;
    height: 20px;
}

.sample {
    width: 80px;
    height: 1px;
    margin-right: -3px;
    background-color: #fff;
}

.panel-foot {
    display: flex;
    padding-right: 6px;
}

.view .panel-foot {
    padding-right: 19px;
}

.panel-foot .panel-title {
    flex: 1;
}

.panel-title {
    display: flex;
    align-items: center;
    justify-content: center;
    gap: 8px;
    height: 22px;
}

/* Drawing tabs */
.file-tabs {
    display: flex;
    align-items: center;
    height: 33px;
    padding: 3px 0 0 15px;
}

.file-tab {
    padding: 0 0 0 9px;
}

.file-tab.active {
    display: flex;
    align-items: center;
    gap: 12px;
    height: 30px;
    margin-left: 9px;
    padding: 0 15px 0 21px;
    background-color: #3b4453;
    clip-path: polygon(12px 0, 100% 0, calc(100% - 12px) 100%, 0 100%);
    font-weight: 700;
}

.add {
    width: 40px;
    height: 24px;
}

/* Drawing area */
.canvas {
    position: relative;
    flex: 1;
    border: solid #3b4453;
    border-width: 5px 0;
    background-color: #212830;
    overflow: hidden;
}

.model {
    position: absolute;
    width: 100%;
    height: 100%;
}

.face {
    fill: #5f1317;
    stroke: #fff;
    shape-rendering: crispEdges;
}

.edge {
    fill: none;
    stroke: #fff;
    shape-rendering: crispEdges;
}

.axis {
    font: 300 21px "Open Sans", sans-serif;
}

.view-controls {
    position: absolute;
    top: 5px;
    left: 7px;
    display: flex;
    font-size: 15px;
}

.view-buttons {
    position: absolute;
    top: 9px;
    right: 14px;
    display: flex;
    gap: 11px;
}

.view-cube {
    position: absolute;
    top: 80px;
    right: 21px;
    display: flex;
    flex-direction: column;
    align-items: center;
}

.wcs {
    gap: 8px;
    width: 56px;
    height: 21px;
    margin-top: 23px;
    border-radius: 5px;
    background-color: #989ba8;
    color: #595d69;
    font: 12px "Liberation Sans", sans-serif;
}

.nav-bar {
    position: absolute;
    top: 286px;
    right: 6px;
    display: flex;
    flex-direction: column;
    align-items: center;
    width: 40px;
    height: 259px;
    border: 1px solid #686d6f;
    border-radius: 4px;
    background-color: #575d60;
    outline: 1px solid #181d23;
}

.nav-bar svg {
    fill: #575d68;
    stroke: #444a55;
}

.nav-bar .solid,
.nav-bar .drop svg {
    fill: #3d434c;
    stroke: none;
}

.nav-bar hr {
    width: 34px;
    margin: 3px 0;
    border: none;
    border-top: 1px solid #63686c;
}

.nav-bar .drop {
    height: 17px;
}

.nav-bar .end {
    align-self: flex-end;
    height: 12px;
    margin: 0 2px 7px 0;
}

.nav-bar .last {
    margin: auto 2px 0 0;
}

/* Command line */
.command-window {
    position: absolute;
    right: 394px;
    bottom: 1px;
    left: 394px;
    display: flex;
    height: 145px;
    background-color: #2a2f3d;
}

.command-grip {
    display: flex;
    flex-direction: column;
    align-items: flex-start;
    gap: 9px;
    width: 31px;
    padding: 6px 0 0 5px;
}

.command-grip button:last-child {
    margin-top: 5px;
}

.command-main {
    flex: 1;
    padding-top: 1px;
}

.history {
    height: 119px;
    margin: 0 0 1px;
    padding: 5px 3px 0;
    background-color: #979899;
    color: #16181c;
    font: 15px/19px "DejaVu Sans Mono", monospace;
    list-style: none;
}

.prompt {
    display: flex;
    align-items: center;
    height: 24px;
    padding: 0 6px 0 5px;
    border-bottom: 1px solid #8d9198;
    background-color: #bcbdbf;
}

.prompt button {
    gap: 2px;
}

.prompt input {
    flex: 1;
    padding: 0 9px;
    border: none;
    background: none;
    font: italic 15px "DejaVu Sans Mono", monospace;
}

.prompt input::placeholder {
    color: #62656a;
    opacity: 1;
}

/* Status bar */
.statusbar {
    display: flex;
    justify-content: space-between;
    height: 30px;
    padding: 0 5px 0 13px;
}

.layout-tabs,
.status-tools,
.group {
    display: flex;
    align-items: center;
}

.layout-tab {
    height: 30px;
    padding: 0 11px 0 9px;
}

.layout-tab.active {
    padding: 0 22px;
    background-color: #3b4453;
    clip-path: polygon(12px 0, 100% 0, calc(100% - 12px) 100%, 0 100%);
    font-weight: 700;
}

.status-tools {
    gap: 3px;
    padding-top: 2px;
}

.group {
    height: 28px;
    background-color: #3b4453;
}

.group.joined {
    margin-left: -2px;
}

.group button {
    width: 30px;
    height: 28px;
}

.group .on {
    width: 28px;
    margin: 0 1px;
    background-color: #608fc3;
}

.group .list {
    width: 20px;
}

.group .space {
    width: 59px;
}

.group .scale {
    gap: 5px;
    width: 42px;
}

.group.sliver {
    width: 4px;
}
```
